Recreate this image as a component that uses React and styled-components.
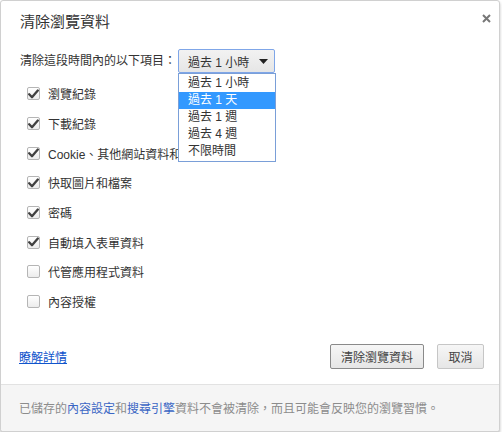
import React from "react";
import styled, { createGlobalStyle } from "styled-components";

const Global = createGlobalStyle`
  html, body { margin: 0; padding: 0; background: #fff; }
  body { font-family: "Open Sans", "Noto Sans CJK TC", sans-serif; font-size: 12px; color: #333; }
  * { box-sizing: border-box; }
`;

const FONT = `"Liberation Sans", "Noto Sans CJK TC", sans-serif`;

const Dialog = styled.div`
  width: 500px;
  height: 432px;
  border: 1px solid #d0d0d0;
  border-radius: 3px;
  box-shadow: 0 2px 3px rgba(0, 0, 0, 0.25);
  background: #fff;
  display: flex;
  flex-direction: column;
  font-family: ${FONT};
`;

const Header = styled.div`
  display: flex;
  justify-content: space-between;
  align-items: flex-start;
  padding: 11px 6px 0 19px;
  height: 48px;
`;

const Title = styled.h1`
  margin: 0;
  font-size: 15px;
  font-weight: normal;
  line-height: 20px;
  color: #333;
`;

const Close = styled.button`
  border: 0;
  background: none;
  padding: 0;
  width: 14px;
  height: 14px;
  display: flex;
  align-items: center;
  justify-content: center;
  margin-top: -1px;
`;

const Body = styled.div`
  padding: 0 15px 0 19px;
  flex: 1;
  display: flex;
  flex-direction: column;
`;

const PeriodRow = styled.div`
  display: flex;
  align-items: center;
  gap: 2px;
  height: 24px;
`;

const Label = styled.span`
  font-size: 12px;
  color: #333;
  line-height: 24px;
`;

const SelectWrap = styled.div`
  position: relative;
  width: 97px;
  height: 24px;
`;

const SelectBox = styled.div`
  width: 97px;
  height: 24px;
  border: 1px solid #7fa6e8;
  border-radius: 2px;
  background: linear-gradient(#f2f2f2, #e6e6e6);
  display: flex;
  align-items: center;
  justify-content: space-between;
  padding: 0 6px 0 9px;
  font-size: 12px;
  color: #333;
`;

const Menu = styled.ul`
  position: absolute;
  top: 24px;
  left: 0;
  width: 98px;
  margin: 0;
  padding: 1px 0;
  list-style: none;
  background: #fff;
  border: 1px solid #7a9fd8;
  z-index: 5;
`;

const MenuItem = styled.li`
  height: 17px;
  line-height: 17px;
  padding-left: 9px;
  font-size: 12px;
  color: ${(p) => (p.$active ? "#fff" : "#333")};
  background: ${(p) => (p.$active ? "#3399ff" : "transparent")};
`;

const List = styled.div`
  margin-top: 6px;
  display: grid;
  grid-auto-rows: 29.7px;
`;

const Row = styled.label`
  display: flex;
  align-items: center;
  padding-left: 7px;
  gap: 8px;
  font-size: 12px;
  color: #333;
`;

const Box = styled.span`
  width: 13px;
  height: 13px;
  border: 1px solid #b5b5b5;
  border-radius: 2px;
  background: linear-gradient(#ffffff, #ececec);
  display: flex;
  align-items: center;
  justify-content: center;
`;

const Actions = styled.div`
  margin-top: auto;
  display: flex;
  align-items: center;
  height: 24px;
  margin-bottom: 16px;
`;

const Link = styled.a`
  color: #1155cc;
  text-decoration: underline;
  font-size: 12px;
  margin-left: -1px;
  margin-right: auto;
`;

const Button = styled.button`
  height: 25px;
  min-width: ${(p) => p.$w}px;
  padding: 0 10px;
  border: 1px solid ${(p) => (p.$primary ? "#8a8a8a" : "#c6c6c6")};
  border-radius: 2px;
  background: linear-gradient(#f6f6f6, #e6e6e6);
  font-family: ${FONT};
  font-size: 12px;
  color: #444;
  margin-left: ${(p) => p.$ml || 0}px;
`;

const Footer = styled.div`
  height: 47px;
  border-top: 1px solid #e2e2e2;
  background: #f5f5f5;
  display: flex;
  align-items: center;
  padding: 0 18px 2px;
  font-size: 12px;
  color: #8c8c8c;
  border-radius: 0 0 3px 3px;
`;

const FootLink = styled.a`
  color: #3a66c4;
  text-decoration: none;
`;

const Check = () => (
  <svg width="11" height="10" viewBox="0 0 11 10">
    <path d="M1.2 5.3 L4 8.2 L9.8 1.5" fill="none" stroke="#404040" strokeWidth="2.3" strokeLinecap="round" strokeLinejoin="round" />
  </svg>
);

const items = [
  ["瀏覽紀錄", true],
  ["下載紀錄", true],
  ["Cookie、其他網站資料和外掛程式資料", true],
  ["快取圖片和檔案", true],
  ["密碼", true],
  ["自動填入表單資料", true],
  ["代管應用程式資料", false],
  ["內容授權", false],
];

const periods = ["過去 1 小時", "過去 1 天", "過去 1 週", "過去 4 週", "不限時間"];

export default function App() {
  return (
    <>
      <Global />
      <Dialog>
        <Header>
          <Title>清除瀏覽資料</Title>
          <Close aria-label="close">
            <svg width="9" height="9" viewBox="0 0 9 9">
              <path d="M1 1 L8 8 M8 1 L1 8" stroke="#777" strokeWidth="2" />
            </svg>
          </Close>
        </Header>
        <Body>
          <PeriodRow>
            <Label>清除這段時間內的以下項目：</Label>
            <SelectWrap>
              <SelectBox>
                <span>過去 1 小時</span>
                <svg width="9" height="5" viewBox="0 0 9 5">
                  <path d="M0 0 H9 L4.5 5 Z" fill="#222" />
                </svg>
              </SelectBox>
              <Menu>
                {periods.map((p, i) => (
                  <MenuItem key={p} $active={i === 1}>{p}</MenuItem>
                ))}
              </Menu>
            </SelectWrap>
          </PeriodRow>
          <List>
            {items.map(([t, c]) => (
              <Row key={t}>
                <Box>{c && <Check />}</Box>
                <span>{t}</span>
              </Row>
            ))}
          </List>
          <Actions>
            <Link href="#">瞭解詳情</Link>
            <Button $primary $w={93}>清除瀏覽資料</Button>
            <Button $w={47} $ml={13}>取消</Button>
          </Actions>
        </Body>
        <Footer>
          <span>
            已儲存的<FootLink href="#">內容設定</FootLink>和<FootLink href="#">搜尋引擎</FootLink>資料不會被清除，而且可能會反映您的瀏覽習慣。
          </span>
        </Footer>
      </Dialog>
    </>
  );
}
